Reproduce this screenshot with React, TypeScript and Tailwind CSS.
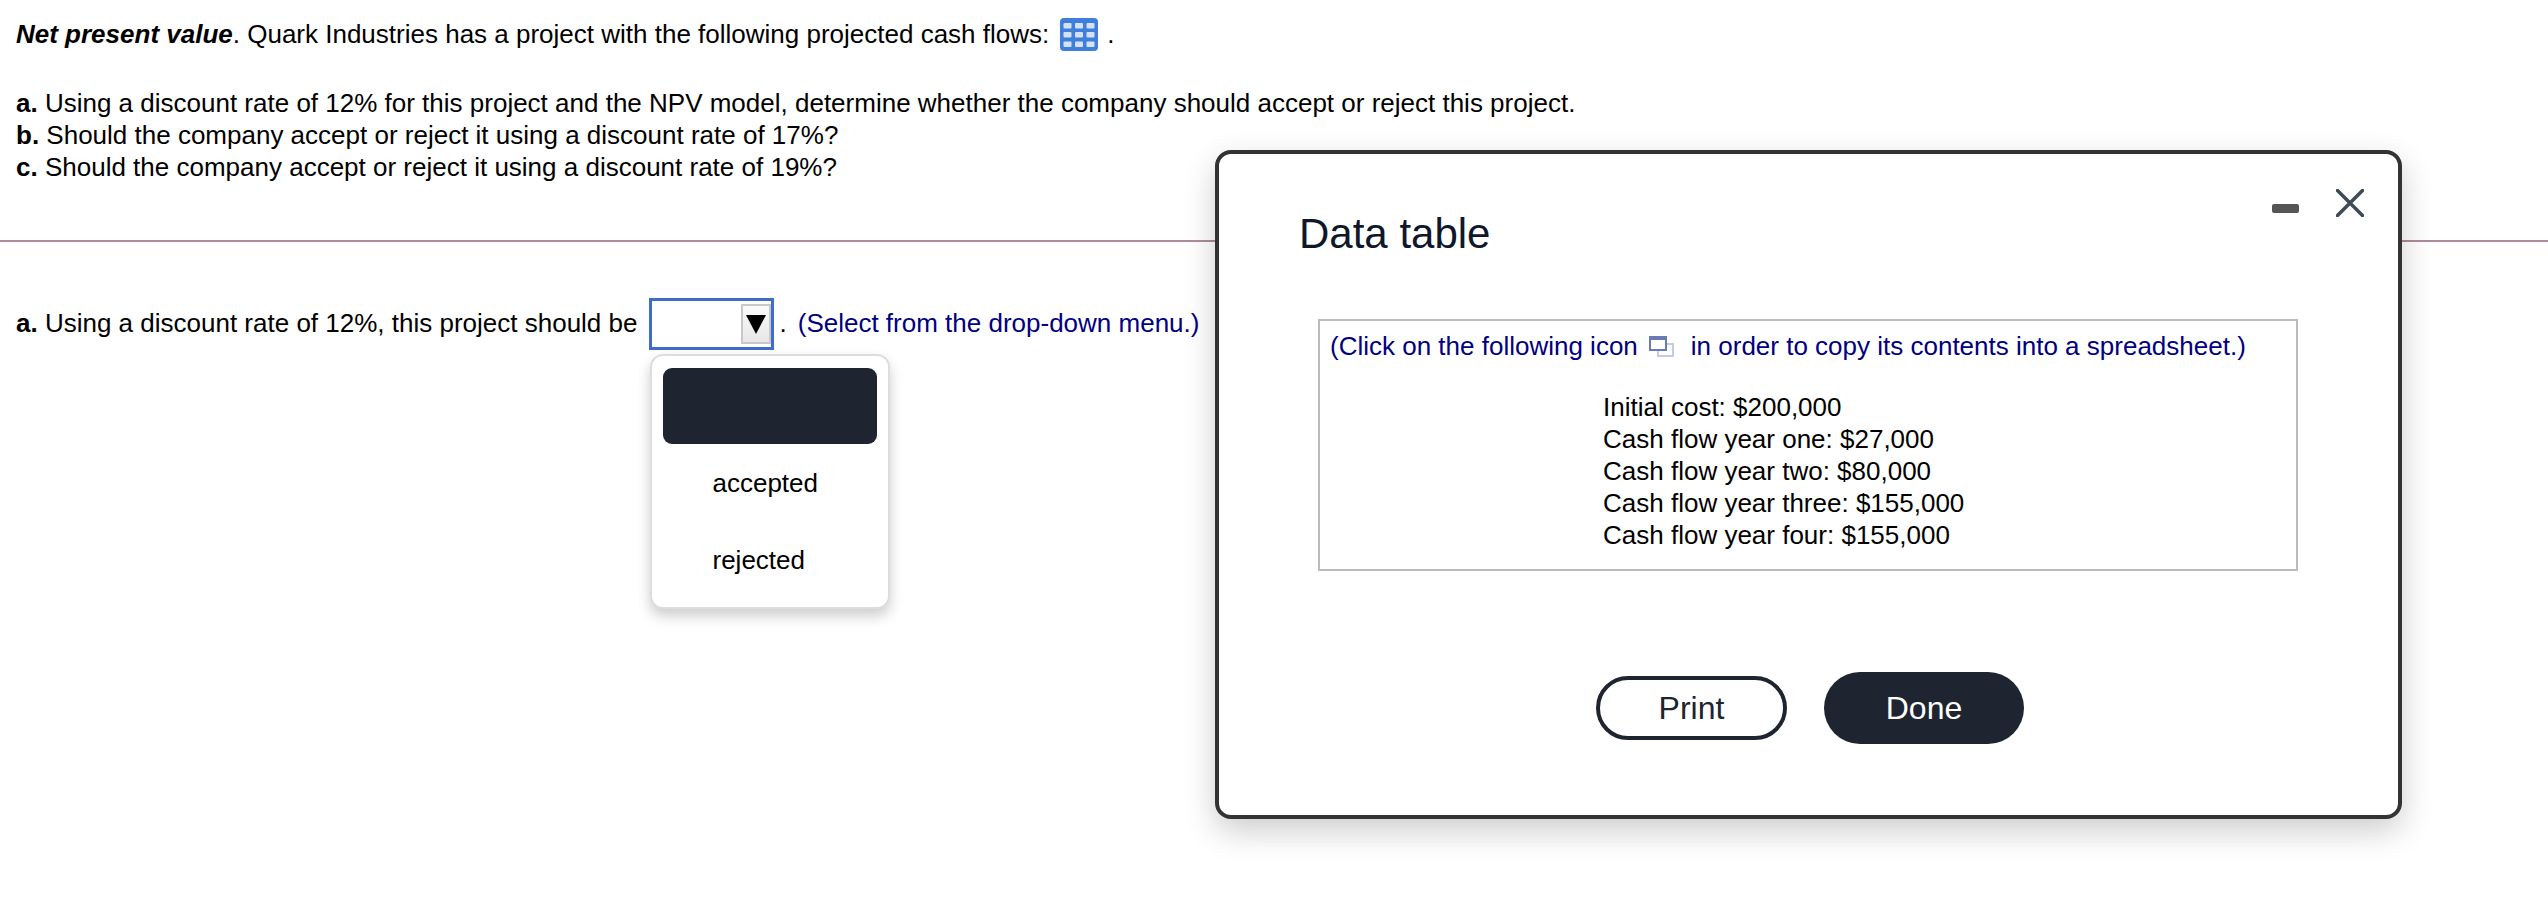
import React from 'react';

const TableIcon = () => (
  <svg width="38" height="33" viewBox="0 0 38 33" className="inline-block">
    <rect width="38" height="33" rx="4" fill="#3f7fd9" />
    {[5, 14, 23.5].map(y =>
      [3.5, 15, 26.5].map(x => <rect key={`${x}-${y}`} x={x} y={y} width="8" height="5.5" rx="1" fill="#d3e2f8" />)
    )}
  </svg>
);

const CopyIcon = () => (
  <svg width="25" height="21" viewBox="0 0 25 21" className="inline-block">
    <rect x="9" y="8" width="15" height="12" fill="#fff" stroke="#c5cbe5" strokeWidth="2" />
    <rect x="1" y="1" width="16" height="13" fill="#fff" stroke="#6a7ab8" strokeWidth="2" />
    <rect x="1" y="1" width="16" height="3" fill="#6a7ab8" />
  </svg>
);

const DataTableModal = () => (
  <div className="absolute left-[1215px] top-[150px] w-[1187px] h-[669px] bg-white border-4 border-[#333333] rounded-[16px] shadow-[0_12px_32px_rgba(0,0,0,0.2)]">
    <div className="flex items-start justify-between pl-[80px] pr-[34px]">
      <h2 className="mt-[55px] text-[42px] leading-[50px] text-[#0f172a]">Data table</h2>
      <div className="mt-[35px] flex items-center gap-[37px]">
        <div className="w-[27px] h-[9px] rounded-[2px] bg-[#555555] translate-y-[5px]" />
        <svg width="28" height="28" viewBox="0 0 28 28">
          <path d="M1.5 1.5 L26.5 26.5 M26.5 1.5 L1.5 26.5" stroke="#3f4a59" strokeWidth="3.5" strokeLinecap="round" />
        </svg>
      </div>
    </div>
    <div className="mt-[60px] ml-[99px] w-[980px] h-[252px] border-2 border-[#bbbbbb] pl-[10px] pt-[9px]">
      <p className="flex items-center h-[32px] text-[#000080]">
        (Click on the following icon
        <span className="ml-[11px] mr-[17px] flex"><CopyIcon /></span>
        in order to copy its contents into a spreadsheet.)
      </p>
      <div className="mt-[29px] ml-[273px] leading-[32px] text-black">
        <p>Initial cost: $200,000</p>
        <p>Cash flow year one: $27,000</p>
        <p>Cash flow year two: $80,000</p>
        <p>Cash flow year three: $155,000</p>
        <p>Cash flow year four: $155,000</p>
      </div>
    </div>
    <div className="mt-[101px] ml-[377px] flex items-center gap-[37px] text-[32px]">
      <button className="w-[191px] h-[64px] rounded-[32px] border-4 border-[#1e2430] bg-white text-[#1e2430]">Print</button>
      <button className="w-[200px] h-[72px] rounded-[36px] bg-[#1e2430] text-white">Done</button>
    </div>
  </div>
);

const App: React.FC = () => {
  return (
    <div className="relative w-[2548px] h-[902px] overflow-hidden bg-white text-[26px] leading-[32px] text-black font-['Liberation_Sans',Arial,sans-serif]">
      <div className="pt-[18px]">
        <p className="flex items-center h-[32px] pl-4">
          <span><b><i>Net present value</i></b>. Quark Industries has a project with the following projected cash flows:</span>
          <span className="ml-[11px] mr-[9px] flex"><TableIcon /></span>
          <span>.</span>
        </p>
        <div className="mt-[37px] pl-4">
          <p><b>a.</b> Using a discount rate of 12% for this project and the NPV model, determine whether the company should accept or reject this project.</p>
          <p><b>b.</b> Should the company accept or reject it using a discount rate of 17%?</p>
          <p><b>c.</b> Should the company accept or reject it using a discount rate of 19%?</p>
        </div>
        <hr className="mt-[57px] border-0 h-[2px] bg-[#b08a9c]" />
        <div className="mt-[56px] pl-4 flex items-center h-[52px]">
          <span className="mb-[2px]"><b>a.</b> Using a discount rate of 12%, this project should be</span>
          <div className="relative ml-[12px] mr-[5px] w-[125px] h-[52px] border-[3px] border-[#3f6cc9] bg-white">
            <div className="absolute left-[89px] top-[3px] w-[30px] h-[40px] border-2 border-[#c8c8c8] bg-gradient-to-b from-[#fafafa] to-[#e8e8e8] flex items-center justify-center">
              <svg width="20" height="20" viewBox="0 0 20 20"><path d="M0 1 H20 L10 20 Z" fill="#000" /></svg>
            </div>
            <div className="absolute left-[-2px] top-[53px] w-[240px] h-[255px] rounded-[13px] border-2 border-[#dddddd] bg-white shadow-[0_7px_14px_rgba(0,0,0,0.2)] px-[11px] pt-[12px]">
              <div className="h-[76px] rounded-[9px] bg-[#1e2430]" />
              <p className="mt-[20px] h-[38px] leading-[38px] pl-[49px]">accepted</p>
              <p className="mt-[39px] h-[38px] leading-[38px] pl-[49px]">rejected</p>
            </div>
          </div>
          <span className="mb-[2px]">.</span>
          <span className="mb-[2px] ml-[11px] text-[#000080]">(Select from the drop-down menu.)</span>
        </div>
      </div>
      <DataTableModal />
    </div>
  );
};

export default App;
